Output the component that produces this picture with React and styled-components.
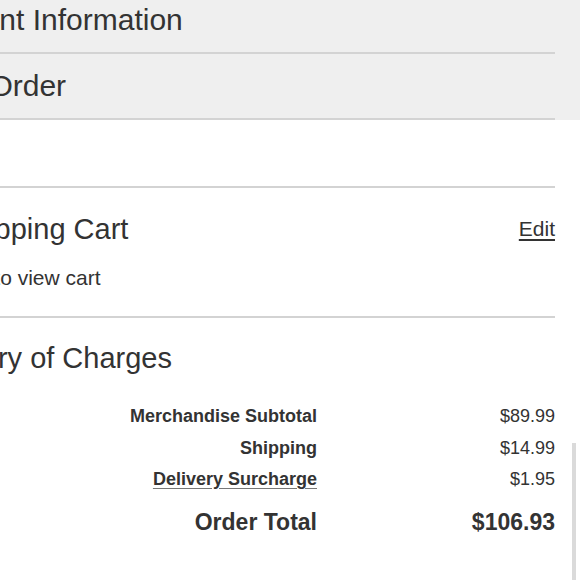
import React from 'react'
import styled, { createGlobalStyle } from 'styled-components'

const GlobalStyle = createGlobalStyle`
  html, body {
    margin: 0;
    padding: 0;
    background: #fff;
    overflow: hidden;
    height: 580px;
  }

  body {
    font-family: 'Liberation Sans', Arial, Helvetica, sans-serif;
    color: #333;
  }
`

const Page = styled.div`
  width: 700px;
  margin: -12px 0 0 -102px;
`

const GrayBand = styled.div`
  background: #efefef;
`

const Content = styled.div`
  width: 657px;
`

const AccordionRow = styled.div`
  height: 64px;
  line-height: 64px;
  padding-left: 8px;
  font-size: 30px;
  border-bottom: 2px solid #d3d3d3;
  white-space: nowrap;
`

const Spacer = styled.div`
  height: 66px;
  border-bottom: 2px solid #d3d3d3;
`

const Section = styled.section`
  padding: ${props => props.$pad};
  padding-left: ${props => props.$inset}px;
  border-bottom: ${props => (props.$divider ? '2px solid #d3d3d3' : 'none')};
`

const SectionHead = styled.div`
  display: flex;
  justify-content: space-between;
  align-items: center;
`

const Title = styled.h2`
  margin: 0;
  font-size: 29px;
  font-weight: 400;
  line-height: 34px;
  white-space: nowrap;
`

const EditLink = styled.a`
  font-size: 21px;
  color: #333;
  text-decoration: underline;
  text-underline-offset: 3px;
  cursor: pointer;
`

const Note = styled.p`
  margin: 19px 0 0;
  font-size: 21px;
  line-height: 25px;
  white-space: nowrap;
`

const Charges = styled.div`
  display: grid;
  grid-template-columns: 1fr 238px;
  margin-top: 26px;
`

const Label = styled.div`
  text-align: right;
  font-weight: 700;
  font-size: ${props => (props.$total ? '23px' : '18px')};
  line-height: ${props => (props.$total ? '28px' : '31.5px')};
  margin-top: ${props => (props.$total ? '12px' : '0')};
  text-decoration: ${props => (props.$link ? 'underline' : 'none')};
  text-underline-offset: 3px;
  text-decoration-color: #777;
`

const Amount = styled.div`
  text-align: right;
  font-weight: ${props => (props.$total ? 700 : 400)};
  font-size: ${props => (props.$total ? '23px' : '18px')};
  line-height: ${props => (props.$total ? '28px' : '31.5px')};
  margin-top: ${props => (props.$total ? '12px' : '0')};
`

const ScrollThumb = styled.div`
  position: fixed;
  left: 572px;
  top: 443px;
  width: 4px;
  height: 140px;
  background: #dadada;
`

const charges = [
  { label: 'Merchandise Subtotal', amount: '$89.99' },
  { label: 'Shipping', amount: '$14.99' },
  { label: 'Delivery Surcharge', amount: '$1.95', link: true },
]

export default function App() {
  return (
    <>
      <GlobalStyle />
      <Page>
        <GrayBand>
          <Content>
            <AccordionRow>Payment Information</AccordionRow>
            <AccordionRow>Place Order</AccordionRow>
          </Content>
        </GrayBand>

        <Content>
          <Spacer />

          <Section $inset={45} $pad="24px 0 26px" $divider>
            <SectionHead>
              <Title>Shopping Cart</Title>
              <EditLink>Edit</EditLink>
            </SectionHead>
            <Note>Click to view cart</Note>
          </Section>

          <Section $inset={0} $pad="23px 0 0">
            <Title>Summary of Charges</Title>
            <Charges>
              {charges.map(c => (
                <React.Fragment key={c.label}>
                  <Label $link={c.link}>{c.label}</Label>
                  <Amount>{c.amount}</Amount>
                </React.Fragment>
              ))}
              <Label $total>Order Total</Label>
              <Amount $total>$106.93</Amount>
            </Charges>
          </Section>
        </Content>
      </Page>
      <ScrollThumb />
    </>
  )
}
